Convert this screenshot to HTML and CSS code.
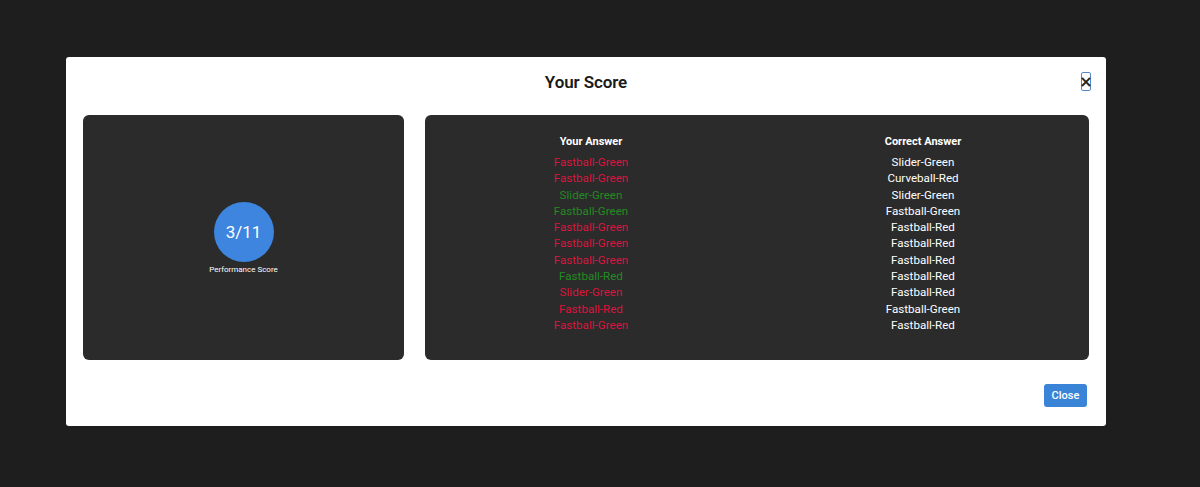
FILE: index.html
```html
<!DOCTYPE html>
<html>
<head>
<meta charset="utf-8">
<link rel="stylesheet" href="styles.css">
</head>
<body>
<div class="modal">
  <div class="modal-header">
    <h2 class="title">Your Score</h2>
    <button class="x-btn" aria-label="Close">&times;</button>
  </div>
  <div class="modal-body">
    <div class="panel score-panel">
      <div class="circle">3/11</div>
      <div class="score-label">Performance Score</div>
    </div>
    <div class="panel answers">
      <div class="col">
        <div class="col-head">Your Answer</div>
        <div class="row wrong">Fastball-Green</div>
        <div class="row wrong">Fastball-Green</div>
        <div class="row right">Slider-Green</div>
        <div class="row right">Fastball-Green</div>
        <div class="row wrong">Fastball-Green</div>
        <div class="row wrong">Fastball-Green</div>
        <div class="row wrong">Fastball-Green</div>
        <div class="row right">Fastball-Red</div>
        <div class="row wrong">Slider-Green</div>
        <div class="row wrong">Fastball-Red</div>
        <div class="row wrong">Fastball-Green</div>
      </div>
      <div class="col">
        <div class="col-head">Correct Answer</div>
        <div class="row">Slider-Green</div>
        <div class="row">Curveball-Red</div>
        <div class="row">Slider-Green</div>
        <div class="row">Fastball-Green</div>
        <div class="row">Fastball-Red</div>
        <div class="row">Fastball-Red</div>
        <div class="row">Fastball-Red</div>
        <div class="row">Fastball-Red</div>
        <div class="row">Fastball-Red</div>
        <div class="row">Fastball-Green</div>
        <div class="row">Fastball-Red</div>
      </div>
    </div>
  </div>
  <div class="modal-footer">
    <button class="close-btn">Close</button>
  </div>
</div>
</body>
</html>
```
FILE: styles.css
```css
html, body {
  margin: 0;
  padding: 0;
  background: #1e1e1e;
  font-family: Roboto, "Liberation Sans", sans-serif;
}
body {
  padding: 57px 94px 0 66px;
  height: 487px;
  box-sizing: border-box;
}
.modal {
  background: #ffffff;
  border-radius: 3px;
  height: 369px;
  display: flex;
  flex-direction: column;
  box-sizing: border-box;
}
.modal-header {
  position: relative;
  height: 58px;
  display: flex;
  align-items: center;
  justify-content: center;
  padding-bottom: 8px;
  box-sizing: border-box;
}
.title {
  margin: 0;
  font-size: 17px;
  font-weight: 600;
  color: #1a1a1a;
  letter-spacing: -0.1px;
}
.x-btn {
  position: absolute;
  right: 15px;
  top: 15px;
  width: 10px;
  height: 19px;
  padding: 0;
  border: 1.5px solid #5b86c8;
  border-radius: 2px;
  background: #fff;
  color: #222;
  font-size: 16px;
  font-weight: 700;
  line-height: 15px;
  font-family: "DejaVu Sans", sans-serif;
  display: flex;
  align-items: center;
  justify-content: center;
  box-sizing: border-box;
}
.modal-body {
  display: grid;
  grid-template-columns: 321px 1fr;
  gap: 21px;
  padding: 0 17px;
  height: 245px;
}
.panel {
  background: #2b2b2b;
  border-radius: 6px;
}
.score-panel {
  display: flex;
  flex-direction: column;
  align-items: center;
  justify-content: center;
  padding-top: 1px;
}
.circle {
  width: 60px;
  height: 60px;
  border-radius: 50%;
  background: #3d85de;
  color: #fff;
  font-size: 17px;
  display: flex;
  align-items: center;
  justify-content: center;
}
.score-label {
  margin-top: 3px;
  color: #fff;
  font-size: 8px;
}
.answers {
  display: grid;
  grid-template-columns: 1fr 1fr;
  padding-top: 20px;
  box-sizing: border-box;
}
.col {
  display: flex;
  flex-direction: column;
  align-items: center;
}
.col-head {
  color: #fff;
  font-weight: 700;
  font-size: 11px;
  line-height: 14px;
  margin-bottom: 5px;
}
.row {
  font-size: 11.6px;
  line-height: 16.3px;
  color: #fff;
}
.row.wrong { color: #dc143c; }
.row.right { color: #228b22; }
.modal-footer {
  display: flex;
  justify-content: flex-end;
  padding: 24px 19px 0 0;
}
.close-btn {
  background: #3a84d8;
  color: #fff;
  border: none;
  border-radius: 3px;
  font-family: Roboto, "Liberation Sans", sans-serif;
  font-size: 11px;
  font-weight: 500;
  width: 43px;
  height: 23px;
  padding: 0;
}
```
